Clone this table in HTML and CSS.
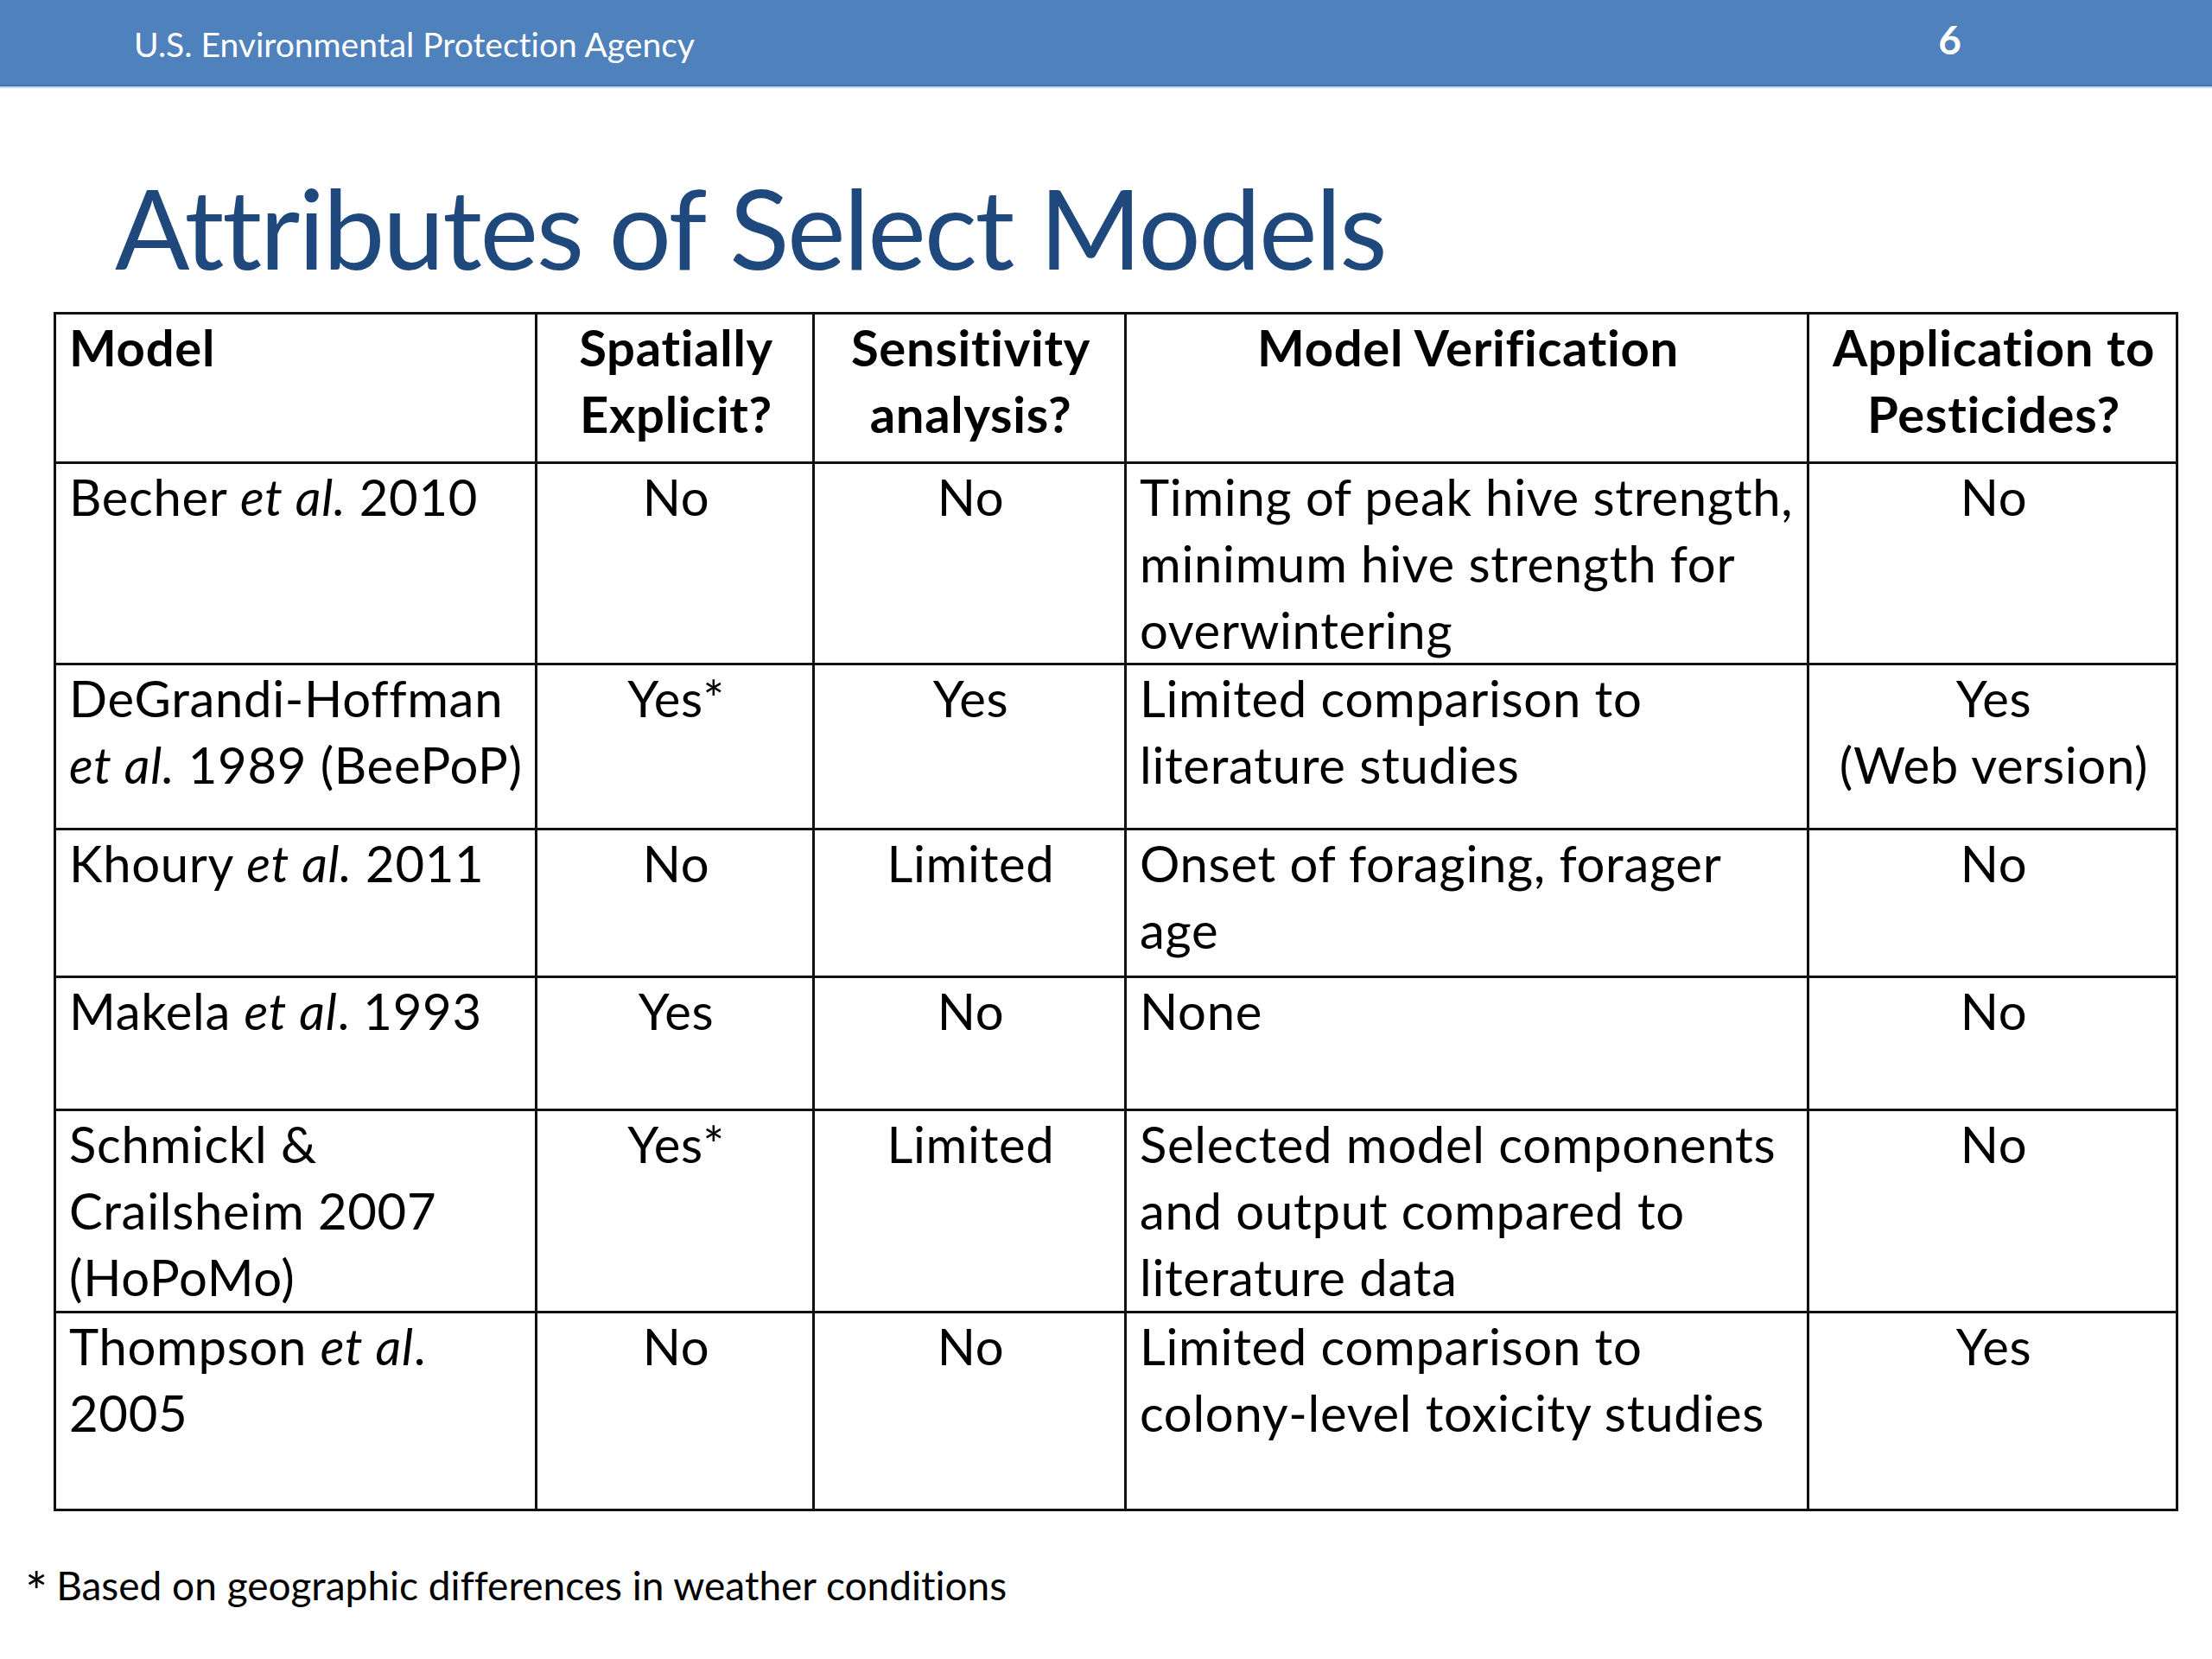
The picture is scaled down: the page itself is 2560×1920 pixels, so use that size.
FILE: index.html
```html
<!DOCTYPE html>
<html>
<head>
<meta charset="utf-8">
<title>Attributes of Select Models</title>
<link rel="stylesheet" href="styles.css">
</head>
<body>
<div class="slide">
  <header class="topbar">
    <span class="agency">U.S. Environmental Protection Agency</span>
    <span class="pagenum">6</span>
  </header>
  <h1 class="title">Attributes of Select Models</h1>
  <table class="models">
    <colgroup>
      <col class="c1"><col class="c2"><col class="c3"><col class="c4"><col class="c5">
    </colgroup>
    <thead>
      <tr class="r0">
        <th class="left">Model</th>
        <th>Spatially<br>Explicit?</th>
        <th>Sensitivity<br>analysis?</th>
        <th>Model Verification</th>
        <th>Application to<br>Pesticides?</th>
      </tr>
    </thead>
    <tbody>
      <tr class="r1">
        <td class="left">Becher <i>et al.</i> 2010</td>
        <td>No</td>
        <td>No</td>
        <td class="left">Timing of peak hive strength,<br>minimum hive strength for<br>overwintering</td>
        <td>No</td>
      </tr>
      <tr class="r2">
        <td class="left">DeGrandi-Hoffman<br><i>et al.</i> 1989 (BeePoP)</td>
        <td>Yes*</td>
        <td>Yes</td>
        <td class="left">Limited comparison to<br>literature studies</td>
        <td>Yes<br>(Web version)</td>
      </tr>
      <tr class="r3">
        <td class="left">Khoury <i>et al.</i> 2011</td>
        <td>No</td>
        <td>Limited</td>
        <td class="left">Onset of foraging, forager<br>age</td>
        <td>No</td>
      </tr>
      <tr class="r4">
        <td class="left">Makela <i>et al</i>. 1993</td>
        <td>Yes</td>
        <td>No</td>
        <td class="left">None</td>
        <td>No</td>
      </tr>
      <tr class="r5">
        <td class="left">Schmickl &amp;<br>Crailsheim 2007<br>(HoPoMo)</td>
        <td>Yes*</td>
        <td>Limited</td>
        <td class="left">Selected model components<br>and output compared to<br>literature data</td>
        <td>No</td>
      </tr>
      <tr class="r6">
        <td class="left">Thompson <i>et al</i>.<br>2005</td>
        <td>No</td>
        <td>No</td>
        <td class="left">Limited comparison to<br>colony-level toxicity studies</td>
        <td>Yes</td>
      </tr>
    </tbody>
  </table>
  <p class="footnote"><span class="star">*</span> Based on geographic differences in weather conditions</p>
</div>
</body>
</html>
```

FILE: styles.css
```css
html, body {
  margin: 0;
  padding: 0;
  background: #ffffff;
}

body {
  font-family: Lato, "Open Sans", "Liberation Sans", sans-serif;
  font-variant-ligatures: none;
  color: #000000;
}

.slide {
  width: 2560px;
  height: 1920px;
  overflow: hidden;
}

.topbar {
  height: 98px;
  background: #4f81bd;
  border-bottom: 2px solid #4676b0;
  box-shadow: 0 2px 0 #c3d7ee;
  display: flex;
  align-items: flex-start;
  justify-content: space-between;
  color: #ffffff;
}

.agency {
  font-size: 39px;
  line-height: 46px;
  margin-left: 155px;
  margin-top: 28px;
}

.pagenum {
  font-size: 46px;
  font-weight: 700;
  line-height: 56px;
  margin-right: 290px;
  margin-top: 18px;
}

.title {
  margin: 84px 0 19px 133px;
  font-size: 128px;
  font-weight: 400;
  letter-spacing: -2.25px;
  line-height: 158px;
  color: #1f497d;
}

.models {
  margin-left: 62px;
  width: 2456px;
  border-collapse: collapse;
  table-layout: fixed;
  border: 3px solid #111111;
}

.c1 { width: 557px; }
.c2 { width: 321px; }
.c3 { width: 361px; }
.c4 { width: 790px; }
.c5 { width: 427px; }

.models th,
.models td {
  border: 3px solid #111111;
  padding: 0 12px 0 15px;
  vertical-align: top;
  text-align: center;
  font-size: 58px;
  letter-spacing: 0.7px;
  line-height: 76.8px;
  white-space: nowrap;
}

.models th {
  font-weight: 700;
}

.models .left {
  text-align: left;
}

.r0 { height: 173px; }
.r1 { height: 229px; }
.r2 { height: 191px; }
.r3 { height: 171px; }
.r4 { height: 154px; }
.r5 { height: 230px; }
.r6 { height: 229px; }

.footnote {
  margin: 56px 0 0 29px;
  font-size: 46px;
  line-height: 60px;
}

.star {
  font-size: 62px;
  line-height: 40px;
  vertical-align: -13px;
  margin-right: -2px;
}
```
